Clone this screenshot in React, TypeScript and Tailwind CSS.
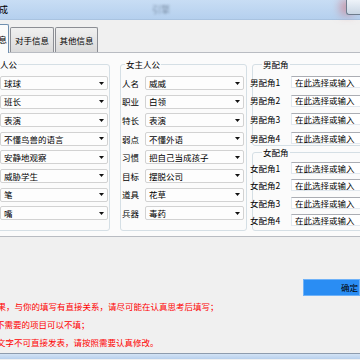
import React from "react";

const heroRows = ["球球", "班长", "表演", "不懂鸟兽的语言", "安静地观察", "威胁学生", "笔", "嘴"];

const heroineRows = [
  { label: "人名", value: "威威" },
  { label: "职业", value: "白领" },
  { label: "特长", value: "表演" },
  { label: "弱点", value: "不懂外语" },
  { label: "习惯", value: "把自己当成孩子" },
  { label: "目标", value: "摆脱公司" },
  { label: "道具", value: "花草" },
  { label: "兵器", value: "毒药" },
];

function Arrow() {
  return (
    <svg width="5" height="3" viewBox="0 0 5 3" className="shrink-0">
      <polygon points="0,0 5,0 2.5,3" fill="#111" />
    </svg>
  );
}

function Combo({ value, width }: { value: string; width: string }) {
  return (
    <div className={`flex h-[14px] shrink-0 items-center justify-between rounded-[2px] border border-[#d2d2d2] bg-[#fdfdfd] pl-[3px] pr-[3px] ${width}`}>
      <span className="text-[8.5px] leading-none">{value}</span>
      <Arrow />
    </div>
  );
}

function RoleInput({ label }: { label: string }) {
  return (
    <div className="flex h-[12px] items-center">
      <span className="ml-[-3px] w-[41px] shrink-0 text-[8.5px] leading-none">{label}</span>
      <div className="flex h-full w-[81px] shrink-0 items-center border border-[#e2e8ee] border-t-[#abadb3] bg-white pl-[3px]">
        <span className="text-[8.5px] leading-none">在此选择或输入</span>
      </div>
    </div>
  );
}

export default function App() {
  return (
    <div className="flex h-[360px] w-[360px] flex-col overflow-hidden bg-[#f0f0f0] font-['Noto_Sans_CJK_SC','Noto_Sans',sans-serif] text-black">
      {/* 标题栏 */}
      <div className="flex h-[20px] shrink-0 items-center bg-gradient-to-b from-[#c8ddf4] to-[#b5d0ee] border-b border-[#a9c3e0]">
        <span className="ml-[-1px] text-[9px] leading-none">成</span>
        <span className="ml-[144px] text-[9px] leading-none text-[#7f93ab] blur-[1.2px]">引擎</span>
        <div className="ml-auto h-[15px] w-[14px] self-start rounded-bl-[3px] border border-t-0 border-r-0 border-[#6e7c8d] bg-gradient-to-b from-[#eef3f9] to-[#c9d6e4] shadow-[-6px_0_8px_rgba(205,110,120,0.55)]" />
      </div>

      {/* 选项卡 */}
      <div className="flex h-[32px] shrink-0 items-end">
        <div className="relative z-10 mb-[-1px] ml-[-32px] flex h-[29px] w-[41px] items-center justify-end rounded-t-[2px] border border-b-0 border-[#6f8fb0] bg-[#fbfbfb] pr-[1px]">
          <span className="text-[8.5px] leading-none">基本信息</span>
        </div>
        <div className="ml-[1px] flex h-[25px] w-[44px] items-center justify-center rounded-t-[2px] border border-b-0 border-[#8c8e94] bg-gradient-to-b from-[#f0f0f0] to-[#dadada]">
          <span className="text-[8.5px] leading-none">对手信息</span>
        </div>
        <div className="ml-[1px] flex h-[25px] w-[43px] items-center justify-center rounded-t-[2px] border border-b-0 border-[#8c8e94] bg-gradient-to-b from-[#f0f0f0] to-[#dadada]">
          <span className="text-[8.5px] leading-none">其他信息</span>
        </div>
      </div>

      {/* 内容面板 */}
      <div className="flex h-[185px] shrink-0 items-start border-y border-[#b9bcc2] bg-[#fbfbfb] pt-[11px]">
        {/* 男主人公 */}
        <div className="relative ml-[-25px] h-[167px] w-[135px] shrink-0 rounded-[3px] border border-[#d5dfe5] pl-[24px] pt-[11px]">
          <span className="absolute left-[6px] top-[-6px] bg-[#fbfbfb] px-[1px] text-[8.5px] leading-[11px]">男主人公</span>
          <div className="flex flex-col gap-[4.6px]">
            {heroRows.map((v) => (
              <Combo key={v} value={v} width="w-[108px]" />
            ))}
          </div>
        </div>

        {/* 女主人公 */}
        <div className="relative ml-[10px] h-[167px] w-[127px] shrink-0 rounded-[3px] border border-[#d5dfe5] pt-[11px]">
          <span className="absolute left-[4px] top-[-6px] bg-[#fbfbfb] px-[1px] text-[8.5px] leading-[11px]">女主人公</span>
          <div className="flex flex-col gap-[4.6px]">
            {heroineRows.map((r) => (
              <div key={r.label} className="flex items-center">
                <span className="w-[24px] shrink-0 pl-[1px] text-[8.5px] leading-none">{r.label}</span>
                <Combo value={r.value} width="w-[99px]" />
              </div>
            ))}
          </div>
        </div>

        {/* 配角 */}
        <div className="ml-[5px] flex w-[120px] shrink-0 flex-col">
          <div className="relative h-[82px] rounded-[3px] border border-[#d5dfe5] pt-[11px]">
            <span className="absolute left-[9px] top-[-6px] bg-[#fbfbfb] px-[1px] text-[8.5px] leading-[11px]">男配角</span>
            <div className="flex flex-col gap-[6.6px]">
              {["男配角1", "男配角2", "男配角3", "男配角4"].map((l) => (
                <RoleInput key={l} label={l} />
              ))}
            </div>
          </div>
          <div className="relative mt-[6px] h-[79px] rounded-[3px] border border-[#d5dfe5] pt-[9px]">
            <span className="absolute left-[9px] top-[-6px] bg-[#fbfbfb] px-[1px] text-[8.5px] leading-[11px]">女配角</span>
            <div className="flex flex-col gap-[5.4px]">
              {["女配角1", "女配角2", "女配角3", "女配角4"].map((l) => (
                <RoleInput key={l} label={l} />
              ))}
            </div>
          </div>
        </div>
      </div>

      {/* 确定按钮 */}
      <div className="mt-[42px] flex h-[17px] shrink-0">
        <div className="ml-[303px] flex h-full w-[62px] items-center border border-[#6fb2f8] bg-[#2a8df3] pl-[37px]">
          <span className="text-[8.5px] leading-none">确定</span>
        </div>
      </div>

      {/* 提示 */}
      <div className="mt-[1px] flex shrink-0 flex-col text-[8.5px] leading-[18px] text-[#ff0000]">
        <span className="ml-[-11px] whitespace-nowrap">结果，与你的填写有直接关系，请尽可能在认真思考后填写；</span>
        <span className="ml-[-4px] whitespace-nowrap">不需要的项目可以不填；</span>
        <span className="ml-[-3px] whitespace-nowrap">文字不可直接发表，请按照需要认真修改。</span>
      </div>

      <div className="mt-[2px] h-[6px] shrink-0 border-t border-[#8d9bad] bg-gradient-to-b from-[#d3e3f5] to-[#b7cfec]" />
    </div>
  );
}
